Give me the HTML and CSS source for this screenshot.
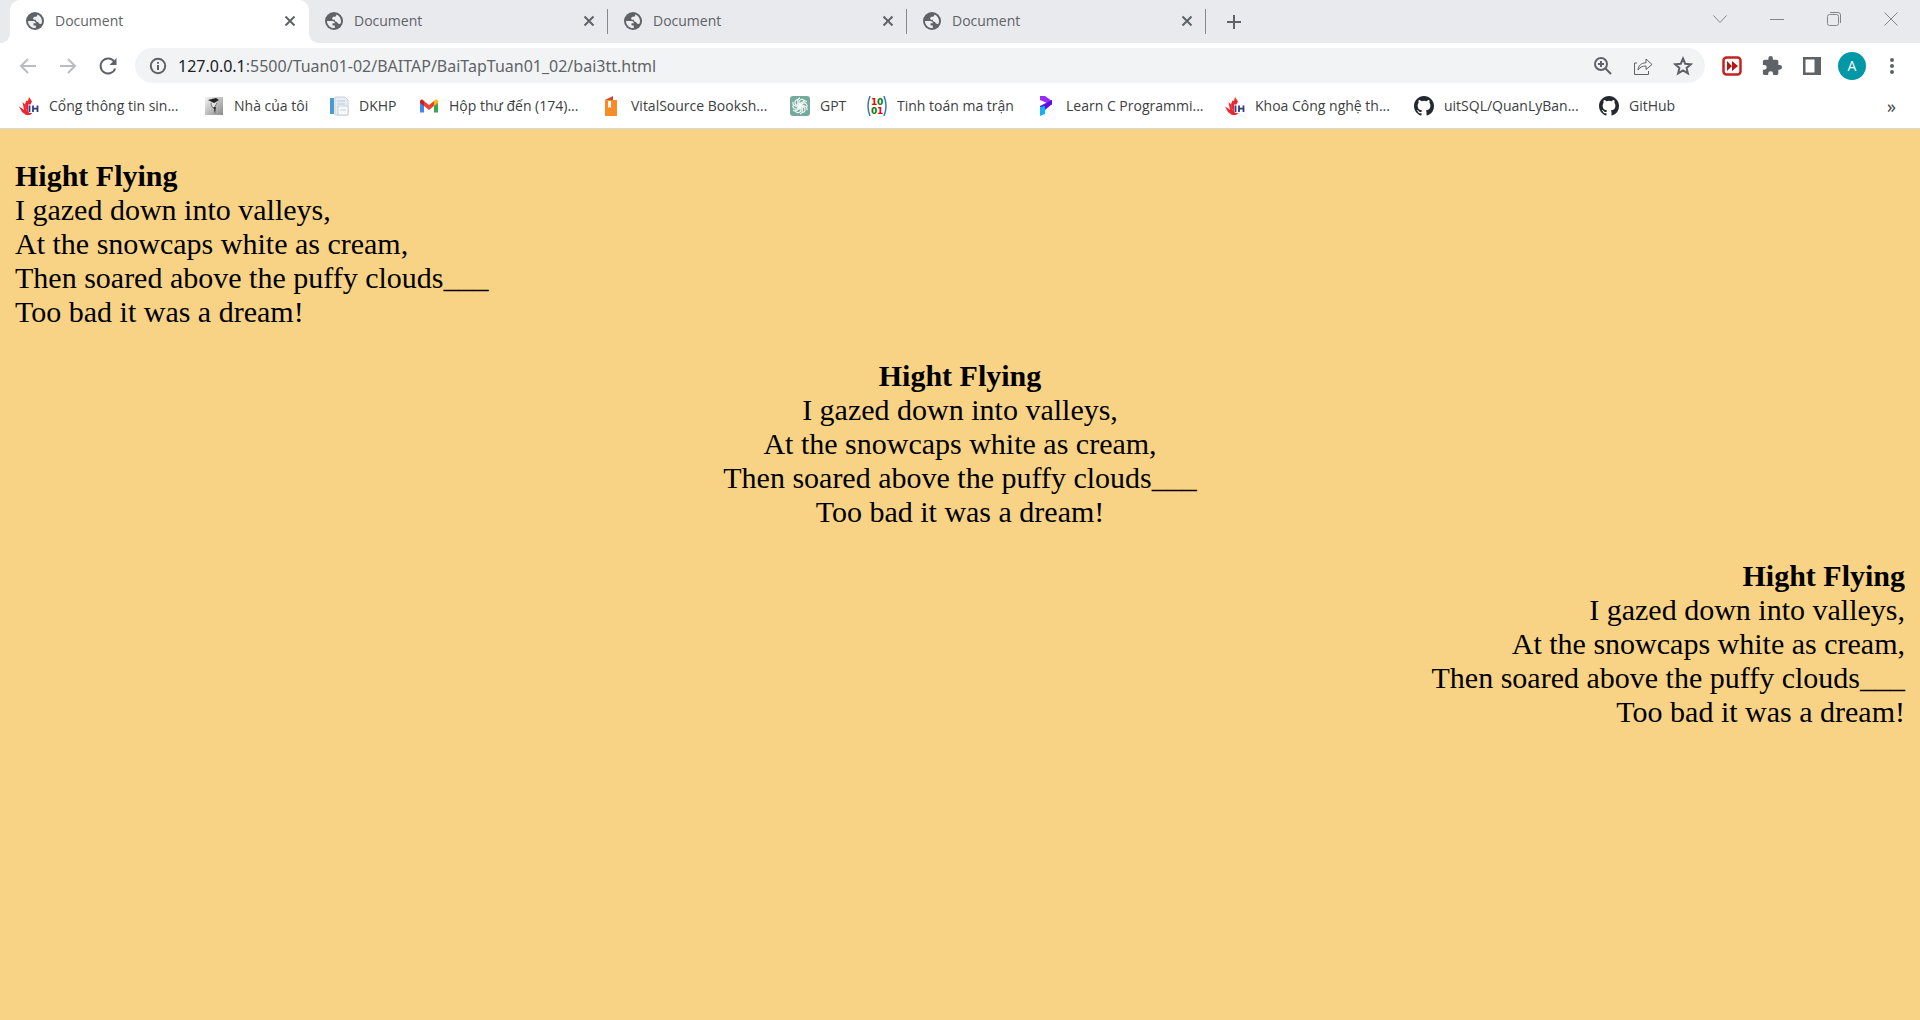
FILE: index.html
```html
<!DOCTYPE html>
<html lang="vi">
<head>
<meta charset="utf-8">
<title>Document</title>
<link rel="stylesheet" href="styles.css">
</head>
<body>
<svg class="defs" aria-hidden="true">
  <symbol id="globe" viewBox="0 0 18 18"><circle cx="9" cy="9" r="9" fill="#5f6368"/><path d="M2 9h5.200c1.800 0 2.600.9 2.600 2.200H7.500v2.400h2.300V16C5.500 16.500 2 13 2 9zM11.300 2.400c2.700 1 4.700 3.600 4.700 6.600 0 1-.2 1.900-.6 2.700-.6.500-1.700.4-2.300-.1-.6-.6-.5-1.500-1.400-1.700-1.500-.2-1.900-.9-1.900-2.100-1.300.1-2.700.1-2.700-1.200 0-1.500 1-1.700 2.400-1.800 1.100-.1 1.700-1.100 1.800-2.400z" fill="#eceef0"/></symbol>
  <symbol id="cross" viewBox="0 0 12 12"><path d="M1.500 1.500l9 9m0-9l-9 9" fill="none" stroke="#5f6368" stroke-width="2"/></symbol>
  <symbol id="flame" viewBox="0 0 20 20"><path d="M10 1l3 4.500-1.500 3H9.200v7.200L7 13 6 8l1.500-3.500L9 5zM3.500 6L6 8.500l1 5 3.500 3.500h3L11 19H7l-4-3-3-5.500 2.500 1.500L5 14z" fill="#ed2630"/><path d="M10.500 9.500V16M14 9.500V16m4.500-6.500V16M14 12.700h4.500" fill="none" stroke="#333d83" stroke-width="1.800"/></symbol>
  <symbol id="github" viewBox="0 0 16 16"><path fill="#24292f" d="M8 0C3.580 0 0 3.580 0 8c0 3.540 2.290 6.530 5.470 7.590.4.070.55-.17.55-.38 0-.19-.01-.82-.01-1.490-2.010.37-2.530-.49-2.690-.94-.09-.23-.48-.94-.82-1.130-.28-.15-.68-.52-.01-.53.63-.01 1.080.58 1.230.82.72 1.210 1.870.87 2.330.66.07-.52.28-.87.51-1.070-1.780-.2-3.640-.89-3.640-3.950 0-.87.31-1.590.82-2.150-.08-.2-.36-1.020.08-2.120 0 0 .67-.21 2.200.82a7.600 7.600 0 0 1 4 0c1.530-1.040 2.200-.82 2.200-.82.44 1.100.16 1.920.08 2.120.51.56.82 1.270.82 2.150 0 3.070-1.870 3.750-3.650 3.950.29.25.54.73.54 1.480 0 1.070-.01 1.930-.01 2.200 0 .21.15.46.55.38A8 8 0 0 0 16 8c0-4.420-3.580-8-8-8z"/></symbol>
</svg>

<header class="browser">
  <div class="tabstrip">
    <div class="tabs">
      <div class="tab active"><svg class="globe"><use href="#globe"/></svg><span class="title">Document</span><button class="close" aria-label="Close tab"><svg><use href="#cross"/></svg></button></div>
      <div class="tab"><svg class="globe"><use href="#globe"/></svg><span class="title">Document</span><button class="close" aria-label="Close tab"><svg><use href="#cross"/></svg></button></div>
      <div class="tab"><svg class="globe"><use href="#globe"/></svg><span class="title">Document</span><button class="close" aria-label="Close tab"><svg><use href="#cross"/></svg></button></div>
      <div class="tab"><svg class="globe"><use href="#globe"/></svg><span class="title">Document</span><button class="close" aria-label="Close tab"><svg><use href="#cross"/></svg></button></div>
    </div>
    <button class="newtab" aria-label="New tab"><svg viewBox="0 0 16 16"><path d="M8 1v14M1 8h14"/></svg></button>
    <div class="window">
      <button aria-label="Search tabs"><svg viewBox="0 0 14 14"><path d="M.5 3.500l6.500 7 6.500-7"/></svg></button>
      <button aria-label="Minimize"><svg viewBox="0 0 14 14"><path d="M0 7.500h14"/></svg></button>
      <button aria-label="Restore"><svg viewBox="0 0 14 14"><rect x=".5" y="2.500" width="11" height="11" rx="2"/><path d="M3 .5h8a2.500 2.500 0 0 1 2.500 2.500v8"/></svg></button>
      <button aria-label="Close"><svg viewBox="0 0 14 14"><path d="M.5.5l13 13m0-13l-13 13"/></svg></button>
    </div>
  </div>

  <div class="toolbar">
    <button class="nav dim" aria-label="Back"><svg viewBox="0 0 20 20"><path d="M18 10H3m7-7l-7 7 7 7"/></svg></button>
    <button class="nav dim" aria-label="Forward"><svg viewBox="0 0 20 20"><path d="M2 10h15m-7-7l7 7-7 7"/></svg></button>
    <button class="nav" aria-label="Reload"><svg viewBox="0 0 20 20"><path d="M16.500 6A7.500 7.500 0 1 0 17.200 12.500"/><path d="M18.500 2v7h-7z" fill="#5f6368" stroke="none"/></svg></button>
    <div class="omnibox">
      <svg class="info" viewBox="0 0 18 18"><circle cx="9" cy="9" r="7.200"/><path d="M9 8v5M9 5v1.800"/></svg>
      <div class="url" role="textbox" aria-label="Address"><span class="host">127.0.0.1</span>:5500/Tuan01-02/BAITAP/BaiTapTuan01_02/bai3tt.html</div>
      <button aria-label="Zoom"><svg viewBox="0 0 20 20"><circle cx="8" cy="8" r="6"/><path d="M12.500 12.500l5.500 5.500M5 8h6M8 5v6"/></svg></button>
      <button aria-label="Share"><svg class="thin" viewBox="0 0 20 20"><path d="M4 7H1.500v11.500h14V15M5 14c.5-4.500 3-7 8-7.200V3l6 5.500-6 5V10c-3.500 0-6 1-8 4z"/></svg></button>
      <button aria-label="Bookmark this page"><svg viewBox="0 0 20 20"><path d="M10 2.500l2.200 5.200 5.700.5-4.300 3.700 1.300 5.500-4.900-2.900-4.900 2.900 1.300-5.500-4.300-3.700 5.700-.5z"/></svg></button>
    </div>
    <div class="tools">
      <button aria-label="Video speed extension"><svg viewBox="0 0 20 20"><rect x="1.500" y="1.500" width="17" height="17" rx="3" fill="#fff" stroke="#c5221f" stroke-width="2.500"/><path d="M5 5l5 5-5 5zM10 5l6 5-6 5z" fill="#b51616" stroke="none"/></svg></button>
      <button aria-label="Extensions"><svg viewBox="1 1 22 22"><path fill="#5f6368" stroke="none" d="M20.500 11H19V7c0-1.100-.9-2-2-2h-4V3.500a2.500 2.500 0 0 0-5 0V5H4c-1.100 0-2 .9-2 2v3.800h1.500a2.700 2.700 0 0 1 0 5.400H2V20c0 1.100.9 2 2 2h3.800v-1.500a2.700 2.700 0 0 1 5.400 0V22H17c1.100 0 2-.9 2-2v-4h1.500a2.500 2.500 0 0 0 0-5z"/></svg></button>
      <button aria-label="Side panel"><svg viewBox="0 0 20 20"><path d="M1 1h18v18H1zM3.500 3.500v13h9v-13z" fill="#5f6368" fill-rule="evenodd" stroke="none"/></svg></button>
      <button class="avatar" aria-label="Profile">A</button>
      <button aria-label="Menu"><svg viewBox="0 0 20 20"><g fill="#5f6368" stroke="none"><circle cx="10" cy="4" r="2"/><circle cx="10" cy="10" r="2"/><circle cx="10" cy="16" r="2"/></g></svg></button>
    </div>
  </div>

  <nav class="bookmarks" aria-label="Bookmarks">
    <a href="#"><svg><use href="#flame"/></svg>Cổng thông tin sin...</a>
    <a href="#"><svg viewBox="0 0 20 20"><defs><linearGradient id="metal" x2="1" y2="1"><stop stop-color="#f4f4f4"/><stop offset="1" stop-color="#8a8a8a"/></linearGradient></defs><path d="M1 1h18v18H1z" fill="url(#metal)"/><path d="M4 4l8-2 3 2-5 3z" fill="#222"/><path d="M7 7l1 4 2 1 3-5" fill="#e4e4e4" stroke="#777"/><path d="M9.500 11l1.500 7 1-7z" fill="#333"/></svg>Nhà của tôi</a>
    <a href="#"><svg viewBox="0 0 20 20"><path d="M6 1h10l3 3v15H6z" fill="#e8eef3" stroke="#c5d2dc"/><path d="M1 2h4v16H1z" fill="#4b9bd0"/><path d="M8 5h8M8 8h8M8 11h8" stroke="#bccbd7"/><path d="M9 10h10v9H9z" fill="#f7f9fb" stroke="#c8d1dc"/><path d="M11 14h6" stroke="#c4cfdc"/></svg>DKHP</a>
    <a href="#"><svg viewBox="0 0 20 20"><path d="M1 5v11.500h4V9z" fill="#4285f4"/><path d="M19 5v11.500h-4V9z" fill="#34a853"/><path d="M5 5l5 4 5-4v5l-5 4-5-4z" fill="#ea4335"/><path d="M1 6c0-3 2-3.500 4-1v5L1 7z" fill="#c5221f"/><path d="M19 6c0-3-2-3.500-4-1v5l4-3z" fill="#fbbc04"/></svg>Hộp thư đến (174)...</a>
    <a href="#" class="narrow"><svg viewBox="0 0 20 20"><path d="M1 4h12v16H1z" fill="#f68b28"/><path d="M1 4l8-4v4z" fill="#d9482b"/><path d="M4 5h3v7l-1.500-1L4 12z" fill="#fff"/></svg>VitalSource Booksh...</a>
    <a href="#"><svg viewBox="0 0 20 20"><rect width="20" height="20" rx="3" fill="#74aa9c"/><g fill="none" stroke="#fff" stroke-width="1.100"><path id="petal" d="M9 11.700V6.300a3 3 0 0 1 5.500-1.500M9 8l4.500-2.600a3 3 0 0 1 3.500.5"/><use href="#petal" transform="rotate(60 10 10)"/><use href="#petal" transform="rotate(120 10 10)"/><use href="#petal" transform="rotate(180 10 10)"/><use href="#petal" transform="rotate(240 10 10)"/><use href="#petal" transform="rotate(300 10 10)"/></g></svg>GPT</a>
    <a href="#"><svg viewBox="0 0 20 20"><path d="M3 0Q-1 10 3 20M17 0q4 10 0 20" fill="none" stroke="#3b78ae" stroke-width="1.500"/><g class="digits"><text x="4" y="9" fill="#e00">1</text><text x="10" y="9" fill="#087808">0</text><text x="4" y="18" fill="#087808">0</text><text x="10" y="18" fill="#e00">1</text></g></svg>Tinh toán ma trận</a>
    <a href="#" class="narrow"><svg viewBox="0 0 20 20"><path d="M1 0h5l7 5v4L1 4z" fill="#982cf5"/><path d="M1 10l12-6v4l-7 6H1z" fill="#5e0ce5"/><path d="M1 11l5-1v8l-5 2z" fill="#12b2f5"/></svg>Learn C Programmi...</a>
    <a href="#"><svg><use href="#flame"/></svg>Khoa Công nghệ th...</a>
    <a href="#"><svg><use href="#github"/></svg>uitSQL/QuanLyBan...</a>
    <a href="#"><svg><use href="#github"/></svg>GitHub</a>
    <button class="more" aria-label="More bookmarks">»</button>
  </nav>
</header>

<main class="page">
  <p class="left"><b>Hight Flying</b><br>I gazed down into valleys,<br>At the snowcaps white as cream,<br>Then soared above the puffy clouds___<br>Too bad it was a dream!</p>
  <p class="center"><b>Hight Flying</b><br>I gazed down into valleys,<br>At the snowcaps white as cream,<br>Then soared above the puffy clouds___<br>Too bad it was a dream!</p>
  <p class="right"><b>Hight Flying</b><br>I gazed down into valleys,<br>At the snowcaps white as cream,<br>Then soared above the puffy clouds___<br>Too bad it was a dream!</p>
</main>
</body>
</html>
```
FILE: styles.css
```css
* { box-sizing: border-box; }
body {
  margin: 0;
  min-height: 100vh;
  display: flex;
  flex-direction: column;
  background: #f8d385;
}
.defs { display: none; }
button {
  border: 0;
  padding: 0;
  background: none;
  font: inherit;
  color: inherit;
  display: flex;
  align-items: center;
  justify-content: center;
}
svg { flex: none; }

.browser {
  font-family: "Open Sans", "Noto Sans", sans-serif;
  font-size: 14px;
  color: #3c4043;
  background: #fff;
  border-bottom: 1px solid #d5d8dc;
}

/* Tab strip */
.tabstrip {
  display: flex;
  height: 43px;
  padding-left: 10px;
  background: #e8eaed;
}
.tabs { display: flex; }
.tab {
  position: relative;
  display: flex;
  align-items: center;
  width: 299px;
  padding: 0 13px 2px 16px;
  color: #5f6368;
}
.tab + .tab::after {
  content: "";
  position: absolute;
  right: 0;
  top: 9px;
  width: 1px;
  height: 25px;
  background: #85888c;
}
.active {
  background: #fff;
  border-radius: 10px 10px 0 0;
}
.active::before,
.active::after {
  content: "";
  position: absolute;
  bottom: 0;
  width: 10px;
  height: 10px;
}
.active::before {
  left: -10px;
  background: radial-gradient(circle at 0 0, transparent 10px, #fff 10px);
}
.active::after {
  right: -10px;
  background: radial-gradient(circle at 100% 0, transparent 10px, #fff 10px);
}
.globe { width: 18px; height: 18px; }
.title { flex: 1; padding-left: 11px; }
.close svg { width: 12px; height: 12px; }
.newtab { width: 56px; }
.newtab svg {
  width: 16px;
  height: 16px;
  stroke: #5f6368;
  stroke-width: 2;
}
.window {
  display: flex;
  margin-left: auto;
  padding-right: 1px;
  height: 37px;
}
.window button { width: 57px; }
.window svg {
  width: 14px;
  height: 14px;
  fill: none;
  stroke: #858689;
}

/* Toolbar */
.toolbar {
  display: flex;
  align-items: center;
  padding: 5px 18px 5px 8px;
}
.toolbar svg {
  width: 20px;
  height: 20px;
  fill: none;
  stroke: #5f6368;
  stroke-width: 2;
}
.toolbar .thin { stroke-width: 1; }
.nav { width: 40px; height: 35px; }
.toolbar .dim svg { stroke: #babcbe; }
.omnibox {
  flex: 1;
  display: flex;
  align-items: center;
  gap: 20px;
  height: 35px;
  margin-left: 7px;
  padding: 0 12px 0 14px;
  border-radius: 18px;
  background: #f1f3f4;
}
.omnibox .info { width: 18px; height: 18px; }
.url {
  flex: 1;
  margin-left: -9px;
  font-family: "Noto Sans", sans-serif;
  font-size: 16px;
  color: #5f6368;
}
.host { color: #202124; }
.tools {
  display: flex;
  align-items: center;
  gap: 20px;
  margin-left: 17px;
}
.tools .avatar {
  width: 28px;
  height: 28px;
  margin: 0 -4px;
  border-radius: 50%;
  background: #0097a7;
  color: #fff;
}

/* Bookmarks bar */
.bookmarks {
  display: grid;
  grid-template-columns: 185px 125px 90px 185px 186px 77px 172px 186px 189px 185px auto 1fr;
  align-items: center;
  height: 40px;
  padding: 0 24px 5px 19px;
}
.bookmarks a {
  display: flex;
  align-items: center;
  gap: 10px;
  color: inherit;
  text-decoration: none;
  white-space: nowrap;
}
.bookmarks svg { width: 20px; height: 20px; }
.bookmarks .narrow { gap: 7px; }
.digits {
  font: bold 9px "DejaVu Sans", sans-serif;
}
.more {
  justify-self: end;
  font-size: 18px;
}

/* Poem */
.page {
  padding: 0 15px;
  font: 30px/34px "Liberation Serif", "Times New Roman", serif;
  color: #000;
}
.page p { margin: 30px 0; }
.center { text-align: center; }
.right { text-align: right; }
```
